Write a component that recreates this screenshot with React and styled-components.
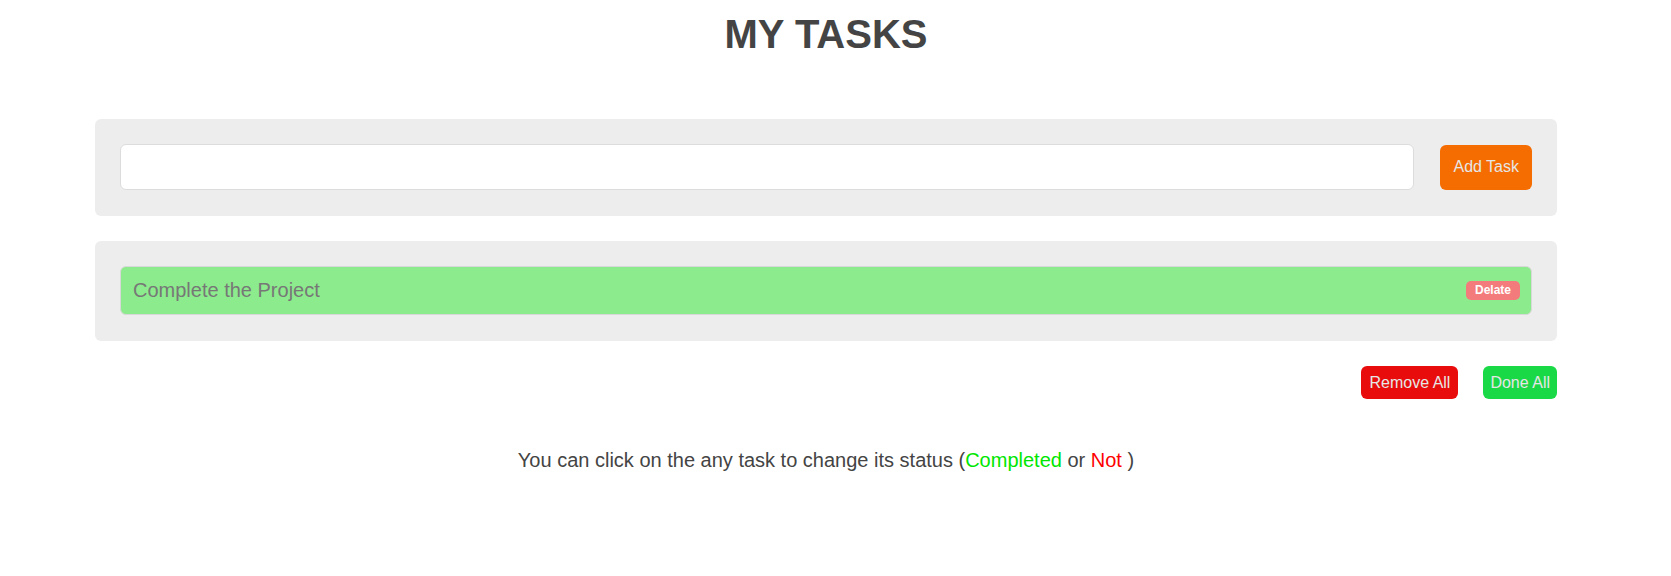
import React from "react";
import styled, { createGlobalStyle } from "styled-components";

const Global = createGlobalStyle`
  html, body { margin: 0; padding: 0; background: #fff; }
  body { font-family: "Liberation Sans", Arial, sans-serif; }
  * { box-sizing: border-box; }
`;

const Page = styled.div`
  padding: 11px 114px 40px 95px;
`;

const Title = styled.h1`
  margin: 0 0 62px;
  text-align: center;
  font-size: 40px;
  line-height: 46px;
  font-weight: 700;
  color: #444;
`;

const Panel = styled.div`
  background: #ededed;
  border-radius: 6px;
  padding: 25px 25px 26px;
  display: flex;
  align-items: center;
  gap: 26px;
  margin-bottom: 25px;
`;

const Input = styled.input`
  flex: 1;
  height: 46px;
  border: 1px solid #dcdcdc;
  border-radius: 6px;
  background: #fff;
  font-family: inherit;
  font-size: 16px;
  outline: none;
  padding: 0 12px;
`;

const Button = styled.button`
  border: none;
  border-radius: 6px;
  font-family: "Liberation Sans", Arial, sans-serif;
  font-size: 16px;
  color: #e6e6e6;
  background: ${(p) => p.$bg};
  height: ${(p) => p.$h}px;
  padding: 0 ${(p) => p.$px}px;
  cursor: pointer;
`;

const TaskRow = styled.div`
  flex: 1;
  height: 49px;
  background: #8ceb8c;
  border: 1px solid #d8d8d8;
  border-radius: 6px;
  display: flex;
  align-items: center;
  justify-content: space-between;
  padding: 0 11px 0 12px;
  color: #777;
  font-size: 20px;
`;

const Badge = styled.span`
  background: #f47b7b;
  color: #fff;
  font-weight: 700;
  font-size: 12px;
  line-height: 19px;
  height: 19px;
  padding: 0 9px;
  border-radius: 5px;
`;

const Actions = styled.div`
  display: flex;
  justify-content: flex-end;
  gap: 25px;
  margin-bottom: 50px;
`;

const Note = styled.p`
  margin: 0;
  text-align: center;
  font-size: 20px;
  line-height: 23px;
  color: #444;
`;

const Colored = styled.span`
  color: ${(p) => p.$c};
`;

export default function App() {
  return (
    <>
      <Global />
      <Page>
        <Title>MY TASKS</Title>
        <Panel>
          <Input type="text" />
          <Button $bg="#f56c00" $h={45} $px={13}>Add Task</Button>
        </Panel>
        <Panel>
          <TaskRow>
            <span>Complete the Project</span>
            <Badge>Delate</Badge>
          </TaskRow>
        </Panel>
        <Actions>
          <Button $bg="#e90c0c" $h={33} $px={8}>Remove All</Button>
          <Button $bg="#1ad946" $h={33} $px={7}>Done All</Button>
        </Actions>
        <Note>
          You can click on the any task to change its status (
          <Colored $c="#00e600">Completed</Colored> or{" "}
          <Colored $c="#ff0000">Not</Colored> )
        </Note>
      </Page>
    </>
  );
}
